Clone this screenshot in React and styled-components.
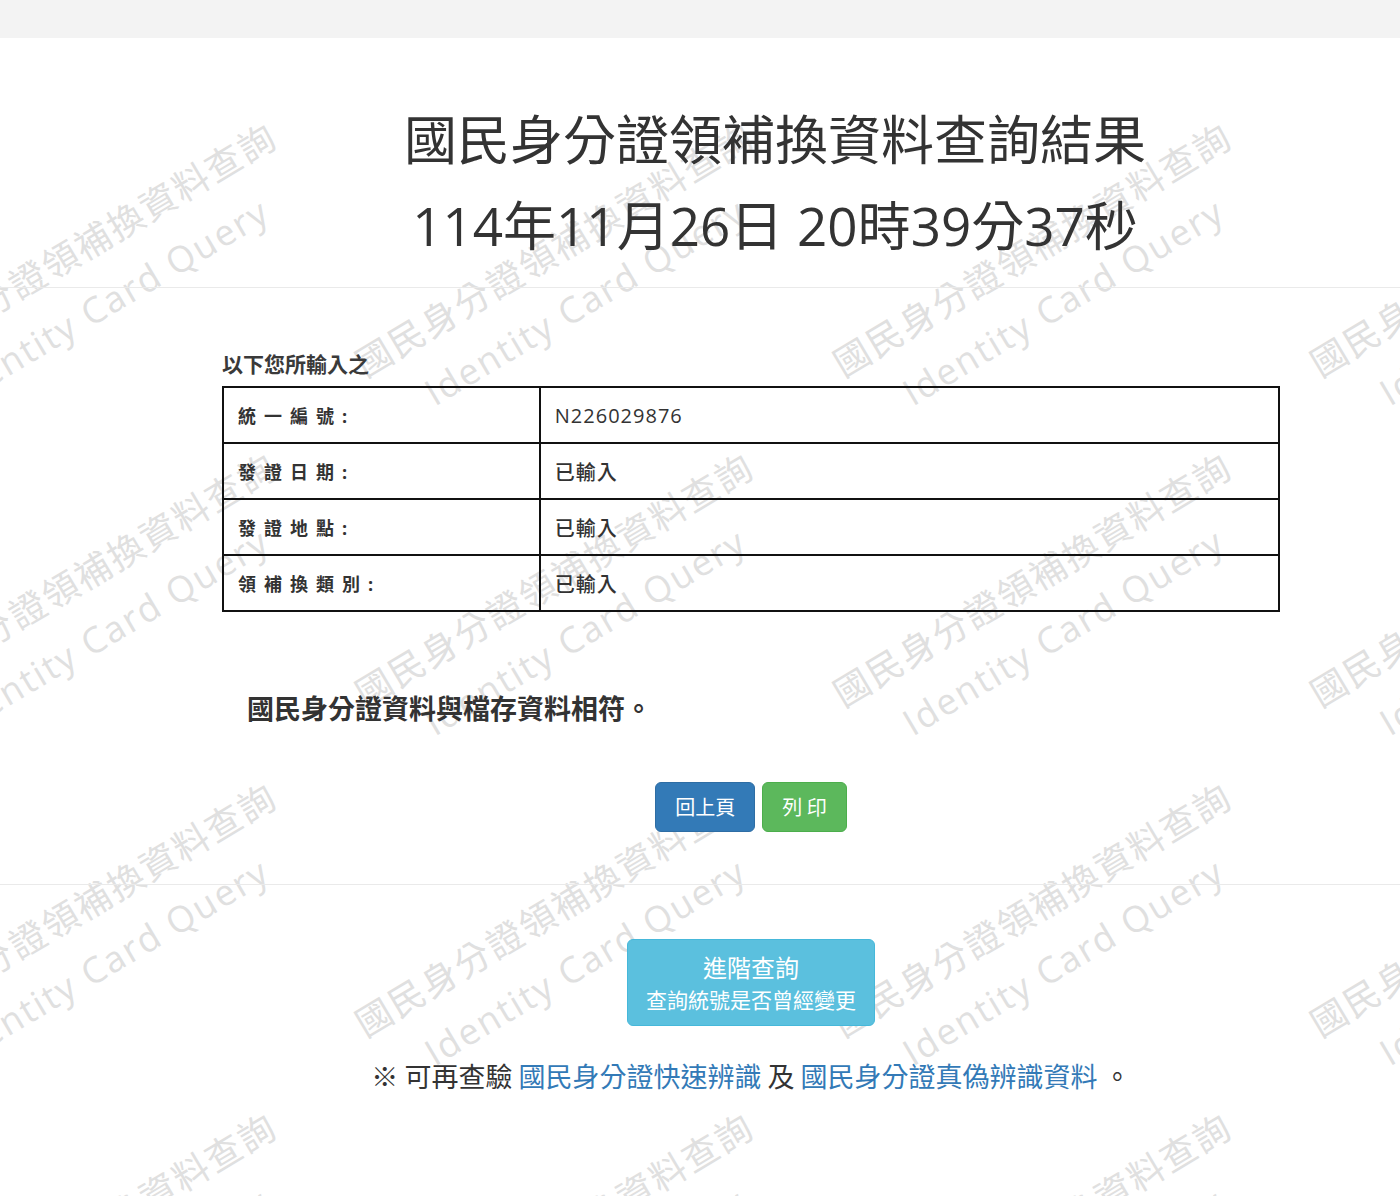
import React from "react";
import styled, { createGlobalStyle } from "styled-components";

const Global = createGlobalStyle`
  html, body { margin: 0; padding: 0; background: #fff; }
  body {
    font-family: "Open Sans", "Noto Sans CJK TC", sans-serif;
    color: #333;
  }
  * { box-sizing: border-box; }
`;

const TopBar = styled.div`
  height: 38px;
  background: #f3f3f3;
`;

const Main = styled.main`
  position: relative;
  overflow: hidden;
  height: 1158px;
`;

const WatermarkLayer = styled.div`
  position: absolute;
  left: -146px;
  top: 73px;
  display: grid;
  grid-template-columns: repeat(4, 477.5px);
  grid-auto-rows: 330px;
  pointer-events: none;
  z-index: 0;
`;

const WatermarkCell = styled.div`
  display: flex;
  align-items: center;
  justify-content: center;
`;

const WatermarkText = styled.div`
  transform: rotate(-30.8deg);
  text-align: center;
  white-space: nowrap;
  color: #e0e0e0;
  font-family: "Open Sans", "Noto Sans CJK TC", sans-serif;
  font-size: 36px;
  letter-spacing: 2px;
  line-height: 60px;
`;

const Content = styled.div`
  position: relative;
  z-index: 1;
`;

const Column = styled.div`
  margin-left: 222px;
  width: 1058px;
`;

const Title = styled.h1`
  margin: 59px 0 0;
  padding-left: 48px;
  text-align: center;
  font-family: "Open Sans", "Noto Sans CJK TC", sans-serif;
  font-weight: 400;
  font-size: 53px;
  line-height: 86px;
  color: #333;
`;

const Divider = styled.hr`
  margin: ${(p) => p.$top}px 0 0;
  border: 0;
  border-top: 1px solid #eaeaea;
`;

const Caption = styled.div`
  margin-top: 63px;
  font-family: "Noto Sans CJK TC", sans-serif;
  font-size: 21px;
  line-height: 24px;
  font-weight: 700;
  color: #3a3a3a;
`;

const Table = styled.table`
  margin-top: 11px;
  width: 100%;
  border-collapse: collapse;
  border: 2px solid #111;
`;

const Cell = styled.td`
  border: 2px solid #111;
  height: 56px;
  padding: 0 14px;
  font-family: "Open Sans", "Noto Sans CJK TC", sans-serif;
  font-size: ${(p) => (p.$label ? 18 : 20)}px;
  color: #333;
  vertical-align: middle;
  width: ${(p) => (p.$label ? "30%" : "auto")};
  font-weight: ${(p) => (p.$label ? 700 : 500)};
  letter-spacing: ${(p) => (p.$label ? "8px" : "1px")};
`;

const Message = styled.p`
  margin: 78px 0 0;
  padding-left: 25px;
  font-family: "Noto Sans CJK TC", sans-serif;
  font-size: 27px;
  line-height: 36px;
  font-weight: 700;
  color: #333;
`;

const ButtonRow = styled.div`
  margin-top: 56px;
  display: flex;
  justify-content: center;
  gap: 7px;
`;

const Button = styled.button`
  height: 50px;
  padding: 0 ${(p) => p.$pad}px;
  border-radius: 6px;
  border: 1px solid ${(p) => (p.$variant === "primary" ? "#2e6da4" : "#4cae4c")};
  background: ${(p) => (p.$variant === "primary" ? "#337ab7" : "#5cb85c")};
  color: #fff;
  font-family: "Noto Sans CJK TC", sans-serif;
  font-size: 20px;
  line-height: 48px;
  cursor: pointer;
`;

const Bottom = styled.div`
  display: flex;
  flex-direction: column;
  align-items: center;
`;

const InfoButton = styled.a`
  margin-top: 54px;
  width: 248px;
  height: 87px;
  display: flex;
  flex-direction: column;
  align-items: center;
  justify-content: center;
  border-radius: 6px;
  border: 1px solid #46b8da;
  background: #5bc0de;
  color: #fff;
  text-decoration: none;
  font-family: "Noto Sans CJK TC", sans-serif;
`;

const InfoLine = styled.span`
  font-size: ${(p) => p.$size}px;
  line-height: 33px;
`;

const Footnote = styled.p`
  margin: 32px 0 0;
  font-family: "Noto Sans CJK TC", sans-serif;
  font-size: 27px;
  line-height: 36px;
  color: #333;
  white-space: nowrap;
`;

const Link = styled.a`
  color: #337ab7;
  text-decoration: none;
`;

const rows = [
  ["統一編號:", "N226029876"],
  ["發證日期:", "已輸入"],
  ["發證地點:", "已輸入"],
  ["領補換類別:", "已輸入"],
];

export default function App() {
  const tiles = Array.from({ length: 16 });
  return (
    <>
      <Global />
      <TopBar />
      <Main>
        <WatermarkLayer>
          {tiles.map((_, i) => (
            <WatermarkCell key={i}>
              <WatermarkText>
                國民身分證領補換資料查詢
                <br />
                Identity Card Query
              </WatermarkText>
            </WatermarkCell>
          ))}
        </WatermarkLayer>
        <Content>
          <Column>
            <Title>
              國民身分證領補換資料查詢結果
              <br />
              114年11月26日 20時39分37秒
            </Title>
          </Column>
          <Divider $top={18} />
          <Column>
            <Caption>以下您所輸入之</Caption>
            <Table>
              <tbody>
                {rows.map(([k, v]) => (
                  <tr key={k}>
                    <Cell $label>{k}</Cell>
                    <Cell>{v}</Cell>
                  </tr>
                ))}
              </tbody>
            </Table>
            <Message>國民身分證資料與檔存資料相符。</Message>
            <ButtonRow>
              <Button $variant="primary" $pad={19}>回上頁</Button>
              <Button $variant="success" $pad={19}>列 印</Button>
            </ButtonRow>
          </Column>
          <Divider $top={52} />
          <Column>
            <Bottom>
              <InfoButton href="#">
                <InfoLine $size={24}>進階查詢</InfoLine>
                <InfoLine $size={21}>查詢統號是否曾經變更</InfoLine>
              </InfoButton>
              <Footnote>
                ※ 可再查驗 <Link href="#">國民身分證快速辨識</Link> 及{" "}
                <Link href="#">國民身分證真偽辨識資料</Link> 。
              </Footnote>
            </Bottom>
          </Column>
        </Content>
      </Main>
    </>
  );
}
